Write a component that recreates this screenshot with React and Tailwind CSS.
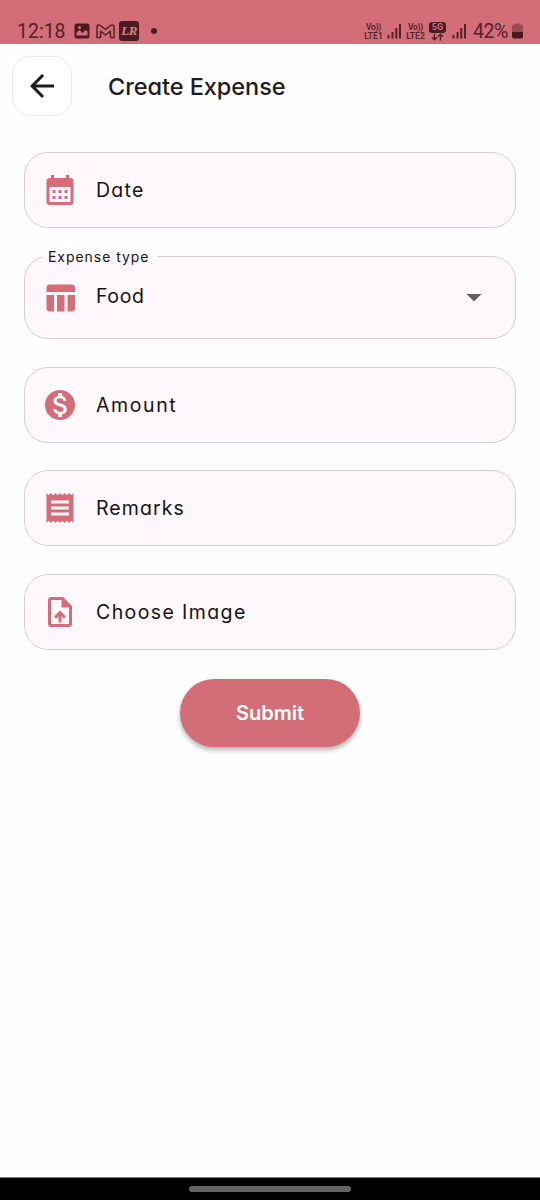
import {
  MdArrowBack,
  MdArrowDropDown,
  MdCalendarMonth,
  MdMonetizationOn,
  MdReceipt,
  MdTableChart,
  MdUploadFile,
} from "react-icons/md";

function SignalBars() {
  return (
    <svg width="15" height="16" viewBox="0 0 15 16" fill="currentColor">
      <rect x="0.5" y="12" width="2" height="3.5" />
      <rect x="4.5" y="9" width="2" height="6.5" />
      <rect x="8.3" y="5" width="2" height="10.5" />
      <rect x="12" y="1" width="2" height="14.5" />
    </svg>
  );
}

function VoLte({ sim }) {
  return (
    <div className="w-[21px] flex flex-col items-center font-semibold text-[8.5px] leading-[10px] whitespace-nowrap">
      <span className="tracking-[-0.3px]">Vo))</span>
      <span className="-mt-px">LTE{sim}</span>
    </div>
  );
}

function StatusBar() {
  return (
    <div className="h-11 bg-[#d36d77] text-[#582029] pt-5 px-[17px] flex items-start justify-between font-['Roboto',sans-serif]">
      <div className="flex items-center h-[22px]">
        <span className="w-[49px] mt-[2px] text-[19.5px] whitespace-nowrap">12:18</span>
        <svg className="ml-2" width="16" height="16" viewBox="0 0 16 16">
          <rect x="0.5" y="0.5" width="15" height="15" rx="2.5" fill="#491b23" />
          <path d="M2.5 12.5V9.500L5.500 7l3 3 3-3 2 1.500v4z" fill="#d36d77" />
          <circle cx="5.5" cy="4.4" r="1.5" fill="#d36d77" />
        </svg>
        <svg className="ml-[6px]" width="19" height="15" viewBox="0 0 19 15" fill="none" stroke="currentColor" strokeWidth="1.5" strokeLinejoin="round">
          <path d="M1 13.5V2.8C1 1 3 .4 4.2 1.4L9.5 5.5l5.3-4.1C16 .4 18 1 18 2.8v10.7h-3.6V7.2L9.5 11 4.6 7.2v6.3z" />
        </svg>
        <span className="ml-1 w-5 h-5 rounded-[3px] bg-[#491b23] text-[#d9858d] text-center italic font-bold text-[13px] leading-5 tracking-[-0.5px] font-['Liberation_Serif',serif]">
          LR
        </span>
        <span className="ml-[12px] w-[6px] h-[6px] rounded-full bg-[#4b1c23]" />
      </div>

      <div className="flex items-center h-[22px]">
        <VoLte sim={1} />
        <div className="mx-[3px]">
          <SignalBars />
        </div>
        <VoLte sim={2} />
        <div className="ml-[3px] w-[17px] flex flex-col items-center">
          <span className="w-[17px] h-[11px] rounded-[3px] bg-[#491b23] text-[#d36d77] text-center font-bold text-[9px] leading-[11px]">
            5G
          </span>
          <svg width="13" height="8" viewBox="0 0 13 8" fill="none" stroke="currentColor" strokeWidth="1.4">
            <path d="M3.5 0.5v6M1 4.2l2.5 2.5L6 4.2M9.5 7.5V1.5M7 3.8l2.5-2.5L12 3.8" />
          </svg>
        </div>
        <div className="ml-[6px]">
          <SignalBars />
        </div>
        <span className="ml-[6px] mt-[2px] w-[36px] text-[19.5px] tracking-[-0.4px] whitespace-nowrap">42%</span>
        <svg className="ml-[3px]" width="11" height="16" viewBox="0 0 11 16">
          <path d="M3 1.5Q3 .5 4 .5h3Q8 .5 8 1.5h1Q11 1.5 11 3.5V9H0V3.5Q0 1.5 2 1.5z" fill="#9c4a54" />
          <path d="M0 9h11v4.5Q11 15.5 9 15.5H2Q0 15.5 0 13.5z" fill="#4b1820" />
        </svg>
      </div>
    </div>
  );
}

function Field({ icon: Icon, label, tracking }) {
  return (
    <div className="h-[76px] flex items-center rounded-[24px] border border-[#d3d0d3] bg-[#fef8fc] pl-[17px]">
      <Icon className="size-9 text-[#d36d77]" />
      <span className={`ml-[18px] text-[19.5px] leading-7 text-[#151316] whitespace-nowrap ${tracking}`}>
        {label}
      </span>
    </div>
  );
}

export default function App() {
  return (
    <div className="w-[540px] h-[1200px] flex flex-col overflow-hidden bg-[#fefefe] font-['Inter',sans-serif] [font-feature-settings:'cv11']">
      <StatusBar />

      {/* App bar */}
      <header className="flex items-center pt-3 pl-3">
        <button className="size-[60px] flex items-center justify-center rounded-[18px] border border-[#e9ebf0] bg-white">
          <MdArrowBack className="size-9 text-[#1d1b1e]" />
        </button>
        <h1 className="ml-9 mt-[2px] text-[23.5px] font-medium tracking-[-0.05px] text-[#1f1b20] whitespace-nowrap">
          Create Expense
        </h1>
      </header>

      <main className="flex flex-col px-6 pt-9">
        <Field icon={MdCalendarMonth} label="Date" tracking="tracking-[1.3px]" />

        {/* Expense type select, label sits on the border */}
        <div className="relative mt-7 mb-[27.6px] h-[83px] flex items-center rounded-[24px] border border-[#d3d0d3] bg-[#fef8fc] pl-[17px] pr-[23px]">
          <span className="absolute left-[18px] -top-[10px] w-[114px] h-5 pl-[5px] leading-5 text-[14px] tracking-[0.95px] text-[#151316] whitespace-nowrap bg-linear-to-b from-[#fefefe] from-50% to-[#fef8fc] to-50%">
            Expense type
          </span>
          <MdTableChart className="size-9 text-[#d36d77]" />
          <span className="ml-[18px] -mt-[2px] text-[19.5px] tracking-[0.6px] text-[#151316]">Food</span>
          <MdArrowDropDown className="ml-auto -mt-[2px] size-9 text-[#625e62]" />
        </div>

        <div className="flex flex-col gap-[27.5px]">
          <Field icon={MdMonetizationOn} label="Amount" tracking="tracking-[1.6px]" />
          <Field icon={MdReceipt} label="Remarks" tracking="tracking-[1.1px]" />
          <Field icon={MdUploadFile} label="Choose Image" tracking="tracking-[1.4px]" />
        </div>

        <button className="mt-[29.4px] mx-auto w-[180px] h-[68px] rounded-full bg-[#d36d77] text-white text-[20px] font-semibold shadow-[0_3px_5px_rgba(0,0,0,0.3)]">
          Submit
        </button>
      </main>

      {/* Gesture bar */}
      <div className="mt-auto h-[23px] bg-black flex items-center justify-center border-t border-[#777]">
        <div className="w-[162px] h-[6px] rounded-full bg-[#646262]" />
      </div>
    </div>
  );
}
